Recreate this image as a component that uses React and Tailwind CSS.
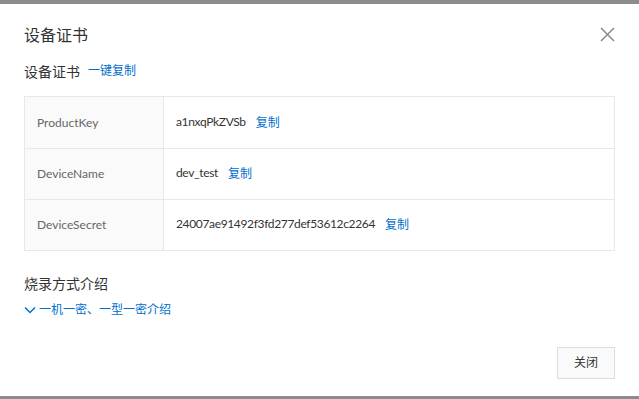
import React from "react";

const font = { fontFamily: 'Lato, "Noto Sans CJK SC", sans-serif' };

function CopyLink() {
  return <span className="ml-[10px] text-[12px] text-[#0070cc] tracking-normal">复制</span>;
}

const rows = [
  { label: "ProductKey", value: "a1nxqPkZVSb" },
  { label: "DeviceName", value: "dev_test" },
  { label: "DeviceSecret", value: "24007ae91492f3fd277def53612c2264" },
];

export default function App() {
  return (
    <div className="w-[639px] h-[399px] bg-[#8c8c8c] flex flex-col" style={font}>
      <div className="h-[4px] shrink-0" />
      <div className="h-[392px] bg-white flex flex-col pl-[24px] pr-[24px] relative">
        {/* Header */}
        <div className="flex items-center justify-between pt-[18px] h-[43px]">
          <h1 className="text-[16px] text-[#333] leading-[24px]">设备证书</h1>
          <svg width="15" height="15" viewBox="0 0 15 15">
            <path d="M1 1 L14 14 M14 1 L1 14" stroke="#8a8a8a" strokeWidth="1.5" />
          </svg>
        </div>

        {/* Subtitle */}
        <div className="flex items-center mt-[14px] h-[20px]">
          <span className="text-[14px] text-[#333]">设备证书</span>
          <span className="ml-[8px] text-[12px] text-[#0070cc]">一键复制</span>
        </div>

        {/* Table */}
        <div className="mt-[15px] border border-[#e8e8e8] flex flex-col">
          {rows.map((r, i) => (
            <div
              key={r.label}
              className={`flex h-[51px] ${i > 0 ? "border-t border-[#e8e8e8]" : ""}`}
            >
              <div className="w-[139px] bg-[#fafafa] border-r border-[#e8e8e8] flex items-center pl-[12px] text-[12px] text-[#666]">
                {r.label}
              </div>
              <div className="flex-1 flex items-center pl-[12px] text-[12px] text-[#333]">
                <span className="-mt-[2px] tracking-[-0.35px]">{r.value}</span>
                <CopyLink />
              </div>
            </div>
          ))}
        </div>

        {/* Burning */}
        <div className="mt-[23px] text-[14px] text-[#333] leading-[20px]">烧录方式介绍</div>
        <div className="mt-[7px] flex items-center text-[12px] text-[#0070cc]">
          <svg width="12" height="12" viewBox="0 0 12 12" className="mr-[3px]">
            <path d="M1 3.5 L6 8.5 L11 3.5" fill="none" stroke="#0070cc" strokeWidth="1.5" />
          </svg>
          <span>一机一密、一型一密介绍</span>
        </div>

        {/* Footer */}
        <div className="flex-1" />
        <div className="flex justify-end pb-[17px]">
          <button className="w-[58px] h-[32px] border border-[#dcdcdc] bg-[#fafafa] text-[12px] text-[#333]">
            关闭
          </button>
        </div>
      </div>
      <div className="flex-1" />
    </div>
  );
}
